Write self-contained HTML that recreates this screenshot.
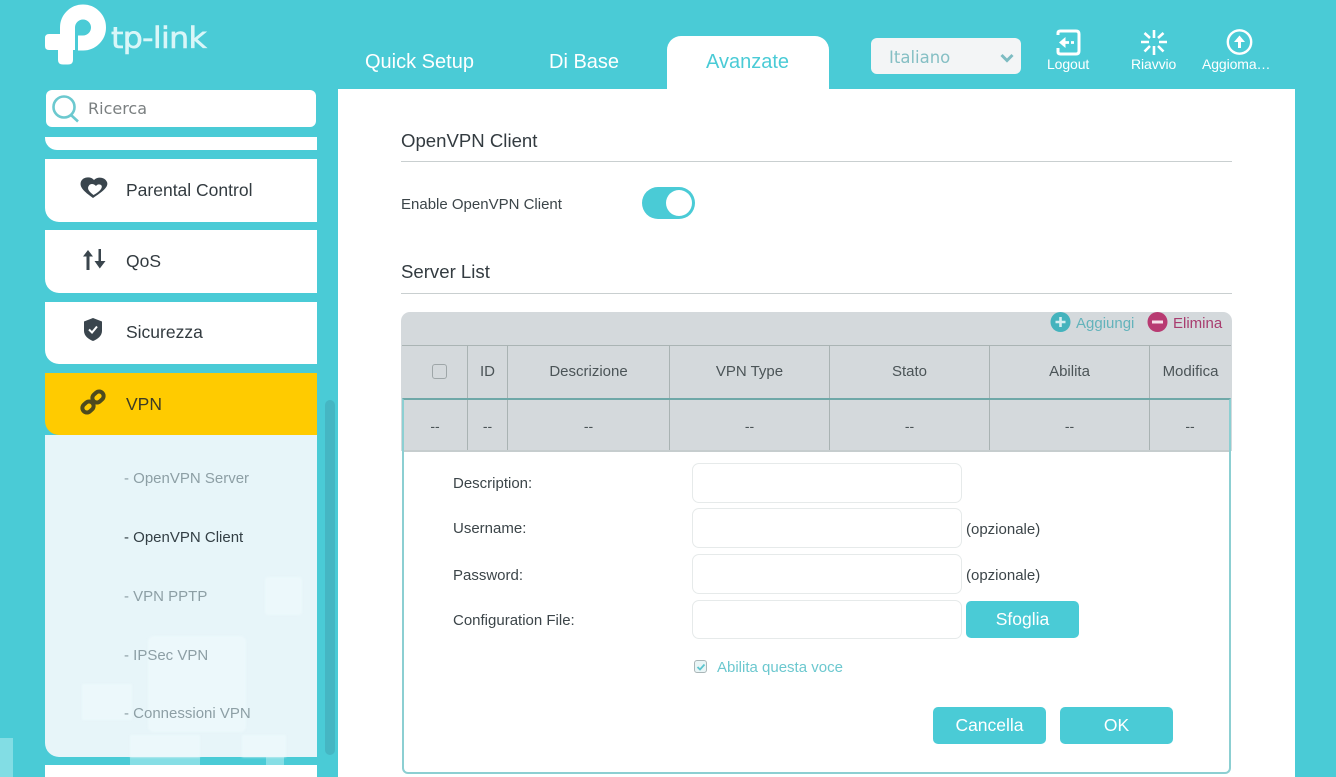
<!DOCTYPE html>
<html><head><meta charset="utf-8">
<style>
html{margin:0;padding:0;overflow:hidden;width:1336px;height:777px}
body{margin:0;padding:0;width:1336px;height:777px;overflow:hidden;position:relative;background:#4acbd6;font-family:"Liberation Sans",Arial,sans-serif;color:#333b40}
.a{position:absolute}
.t{position:absolute;white-space:nowrap;line-height:20px}
.card{position:absolute;left:45px;width:272px;background:#fff;border-radius:0 0 0 14px}
.sub{position:absolute;left:124px;font-size:15px;color:#8d9fa5;white-space:nowrap;line-height:20px}
.c{position:absolute;width:1px;background:#a9b3b3}
.cell{position:absolute;text-align:center;font-size:14px;line-height:20px;color:#4b5457}
.inp{position:absolute;left:692px;width:268px;background:#fff;border:1px solid #e6eaea;border-radius:7px}
.lab{position:absolute;left:453px;font-size:15px;color:#3c4549;line-height:20px;white-space:nowrap}
.btn{position:absolute;background:#4acbd6;color:#fff;border-radius:5px;text-align:center;font-size:17.5px;line-height:36px;height:37px}
.nav{position:absolute;color:#fff;font-size:20px;line-height:24px;white-space:nowrap;top:50px}
.ic{position:absolute;color:#fff;font-size:14px;line-height:16px;white-space:nowrap;top:56px;letter-spacing:-.1px;text-align:center}
</style></head><body>

<!-- logo -->
<svg class="a" style="left:40px;top:0" width="110" height="70" viewBox="40 0 110 70">
<path d="M67.500 36V27.500A15.500 15.500 0 1 1 83 43H78" fill="none" stroke="#fff" stroke-width="15"/>
<path d="M49 34H75V50H73V60Q73 64.500 68 64.500H63Q58 64.500 58 60V50H49Q45 50 45 46V38Q45 34 49 34Z" fill="#fff"/>
</svg>
<div class="t" style="left:111px;top:21px;line-height:34px;color:#d9f6f8;letter-spacing:-.6px;font-family:'DejaVu Sans','Liberation Sans',sans-serif;font-size:29px;-webkit-text-stroke:.6px #d9f6f8;transform:scaleX(1.09);transform-origin:left">tp-link</div>

<!-- nav -->
<div class="nav" style="left:365px">Quick Setup</div>
<div class="nav" style="left:549px">Di Base</div>
<div class="a" style="left:667px;top:36px;width:162px;height:54px;background:#fff;border-radius:14px 14px 0 0"></div>
<div class="nav" style="left:706px;color:#4acbd6;font-size:20px">Avanzate</div>

<!-- language -->
<div class="a" style="left:871px;top:38px;width:150px;height:36px;background:#f3f5f6;border-radius:6px"></div>
<div class="t" style="left:889px;top:48px;color:#85bfc4;font-family:'DejaVu Sans','Liberation Sans',sans-serif;font-size:16.500px">Italiano</div>
<svg class="a" style="left:998px;top:50px" width="20" height="16" viewBox="0 0 20 16"><path d="M3.500 5L9 10.500L14.500 5" fill="none" stroke="#7dbcc2" stroke-width="3"/></svg>

<!-- header icons -->
<svg class="a" style="left:1050px;top:26px" width="36" height="32" viewBox="0 0 36 32" fill="none" stroke="#fff">
<path d="M8 9V7Q8 5 10.500 5H26Q29 5 29 8V25Q29 28 26 28H10.500Q8 28 8 26V22" stroke-width="3"/>
<path d="M9 16.500L15.500 11V22Z" fill="#fff" stroke="none"/><path d="M15 16.500H19M21 16.500H24" stroke-width="2.800"/>
</svg>
<div class="ic" style="left:1047px">Logout</div>
<svg class="a" style="left:1138px;top:27px" width="32" height="30" viewBox="0 0 32 30" stroke="#fff" stroke-width="2.600">
<path d="M16 3V11M16 19V28M3 15H11M21 15H29M6.500 6L12 11M20 19L25.500 24.500M25.500 6L20 11M12 19L6.500 24.500"/></svg>
<div class="ic" style="left:1131px">Riavvio</div>
<svg class="a" style="left:1225px;top:28px" width="30" height="28" viewBox="0 0 30 28" fill="none" stroke="#fff">
<circle cx="14.500" cy="14" r="11.700" stroke-width="2.400"/><path d="M14.500 7.500L20 14H9Z" fill="#fff" stroke="none"/><path d="M14.500 13V20" stroke-width="3"/></svg>
<div class="ic" style="left:1202px">Aggioma…</div>

<!-- search -->
<div class="a" style="left:46px;top:90px;width:270px;height:37px;background:#fff;border-radius:6px"></div>
<svg class="a" style="left:50px;top:94px" width="32" height="32" viewBox="0 0 32 32" fill="none" stroke="#6cc9cf" stroke-width="2.600"><circle cx="14" cy="13" r="10.500"/><path d="M21 21L28 27.500"/></svg>
<div class="t" style="left:88px;top:99px;color:#7a7f80;font-family:'DejaVu Sans','Liberation Sans',sans-serif;font-size:16px">Ricerca</div>

<!-- sidebar -->
<div class="card" style="top:137px;height:13px;border-radius:0 0 0 12px"></div>
<div class="a" style="left:0;top:738px;width:13px;height:39px;background:#82dde4"></div>
<div class="a" style="left:130px;top:757px;width:70px;height:8px;background:#86dee5"></div>
<div class="a" style="left:266px;top:757px;width:18px;height:8px;background:#86dee5"></div>
<div class="card" style="top:159px;height:63px"></div>
<div class="card" style="top:230px;height:63px"></div>
<div class="card" style="top:302px;height:62px"></div>
<div class="card" style="top:373px;height:62px;background:#ffcb00"></div>
<div class="card" style="top:435px;height:322px;background:#e7f5f9"></div>
<div class="card" style="top:765px;height:12px;border-radius:0"></div>
<!-- faint watermark -->
<div class="a" style="left:265px;top:577px;width:37px;height:38px;background:#ecf8fb;border-radius:3px;filter:blur(1px)"></div>
<div class="a" style="left:148px;top:636px;width:98px;height:96px;background:#ecf8fb;border-radius:6px;filter:blur(1px)"></div>
<div class="a" style="left:82px;top:684px;width:50px;height:36px;background:#ecf8fb;filter:blur(1px)"></div>
<div class="a" style="left:130px;top:735px;width:70px;height:22px;background:#ecf8fb;filter:blur(1px)"></div>
<div class="a" style="left:242px;top:735px;width:44px;height:22px;background:#ecf8fb;filter:blur(1px)"></div>
<div class="a" style="left:325px;top:400px;width:10px;height:355px;background:#45b6c3;border-radius:5px"></div>

<svg class="a" style="left:78px;top:176px" width="32" height="24" viewBox="0 0 32 24">
<path d="M16 4C13 0 5 .5 3 5.500C1 11 6 15.500 15 22C24 16 31 11 29 6C26.500 .5 19 .5 16 4Z" fill="#3a454d"/>
<path d="M15.500 19C10 15 9 12 11 9.500C13 7 16 8 18 10C19.500 8 22 8 23.500 9.500C25 12 21 16 15.500 19Z" fill="#fff"/></svg>
<div class="t" style="left:126px;top:180px;font-size:17.500px">Parental Control</div>
<svg class="a" style="left:80px;top:247px" width="28" height="26" viewBox="0 0 28 26" fill="#3a454d" stroke="none">
<path d="M8 3L13 9.500H9.500V23H6.500V9.500H3Z"/><path d="M18.500 2H21V14H25.500L19.800 21.500L14.500 14H18.500Z"/></svg>
<div class="t" style="left:126px;top:251px;font-size:17.500px">QoS</div>
<svg class="a" style="left:82px;top:317px" width="22" height="26" viewBox="0 0 22 26">
<path d="M11 1L20 4.500V14C20 19 15 22.500 11 24C7 22.500 2 19 2 14V4.500Z" fill="#3a454d"/><path d="M7 12.500L10 15.500L15 9.500" fill="none" stroke="#fff" stroke-width="2"/></svg>
<div class="t" style="left:126px;top:322px;font-size:17.500px">Sicurezza</div>
<svg class="a" style="left:79px;top:388px" width="28" height="28" viewBox="0 0 28 28" fill="none" stroke="#4d4a1e" stroke-width="4">
<rect x="3" y="14.500" width="12" height="9" rx="4.500" transform="rotate(-42 9 19)"/><rect x="13" y="4.500" width="12" height="9" rx="4.500" transform="rotate(-42 19 9)"/></svg>
<div class="t" style="left:126px;top:394px;font-size:17.500px;color:#3d3c25">VPN</div>

<div class="sub" style="top:469px">- OpenVPN Server</div>
<div class="sub" style="top:528px;color:#333f45">- OpenVPN Client</div>
<div class="sub" style="top:587px">- VPN PPTP</div>
<div class="sub" style="top:646px">- IPSec VPN</div>
<div class="sub" style="top:704px">- Connessioni VPN</div>

<!-- main -->
<div class="a" style="left:338px;top:89px;width:957px;height:688px;background:#fff"></div>
<div class="a" style="left:667px;top:86px;width:162px;height:6px;background:#fff"></div>

<div class="t" style="left:401px;top:131px;font-size:18.600px">OpenVPN Client</div>
<div class="a" style="left:401px;top:161px;width:831px;height:1px;background:#c9cfd0"></div>
<div class="t" style="left:401px;top:195px;font-size:15px;color:#3c4549">Enable OpenVPN Client</div>
<div class="a" style="left:642px;top:187px;width:53px;height:32px;background:#4acbd6;border-radius:16px"></div>
<div class="a" style="left:666px;top:190px;width:26px;height:26px;background:#fff;border-radius:50%"></div>

<div class="t" style="left:401px;top:262px;font-size:18.600px">Server List</div>
<div class="a" style="left:401px;top:293px;width:831px;height:1px;background:#c9cfd0"></div>

<!-- table -->
<div class="a" style="left:401px;top:312px;width:831px;height:139px;background:#d4d9dc;border-radius:9px 9px 0 0"></div>
<div class="a" style="left:402px;top:345px;width:829px;height:1px;background:#aab4b4"></div>
<svg class="a" style="left:1050px;top:312px" width="21" height="21" viewBox="0 0 21 21"><circle cx="10.500" cy="10" r="10" fill="#44b3bd"/><path d="M10.500 5V15M5.500 10H15.500" stroke="#d4eef1" stroke-width="2.600"/></svg>
<div class="t" style="left:1076px;top:314px;font-size:15px;color:#63b3bb">Aggiungi</div>
<svg class="a" style="left:1147px;top:312px" width="21" height="21" viewBox="0 0 21 21"><circle cx="10.500" cy="10" r="10" fill="#b83b72"/><path d="M5 10H16" stroke="#f6e1ea" stroke-width="3"/></svg>
<div class="t" style="left:1173px;top:314px;font-size:15px;color:#a83d6f">Elimina</div>

<div class="c" style="left:467px;top:345px;height:105px"></div>
<div class="c" style="left:507px;top:345px;height:105px"></div>
<div class="c" style="left:669px;top:345px;height:105px"></div>
<div class="c" style="left:829px;top:345px;height:105px"></div>
<div class="c" style="left:989px;top:345px;height:105px"></div>
<div class="c" style="left:1149px;top:345px;height:105px"></div>
<div class="a" style="left:432px;top:364px;width:13px;height:13px;border:1.500px solid #9ea6a8;border-radius:3px"></div>
<div class="cell" style="left:468px;top:362px;width:39px;font-size:15px">ID</div>
<div class="cell" style="left:508px;top:362px;width:161px;font-size:15px">Descrizione</div>
<div class="cell" style="left:670px;top:362px;width:159px;font-size:15px">VPN Type</div>
<div class="cell" style="left:830px;top:362px;width:159px;font-size:15px">Stato</div>
<div class="cell" style="left:990px;top:362px;width:159px;font-size:15px">Abilita</div>
<div class="cell" style="left:1150px;top:362px;width:81px;font-size:15px">Modifica</div>

<!-- selected row frame -->
<div class="a" style="left:402px;top:398px;width:825px;height:372px;border:2px solid #8ccfd2;border-radius:0 0 6px 6px;border-top:2px solid #6fa8a8"></div>
<div class="a" style="left:404px;top:450px;width:825px;height:1.500px;background:#c6cdce"></div>
<div class="cell" style="left:403px;top:416px;width:64px">--</div>
<div class="cell" style="left:468px;top:416px;width:39px">--</div>
<div class="cell" style="left:508px;top:416px;width:161px">--</div>
<div class="cell" style="left:670px;top:416px;width:159px">--</div>
<div class="cell" style="left:830px;top:416px;width:159px">--</div>
<div class="cell" style="left:990px;top:416px;width:159px">--</div>
<div class="cell" style="left:1150px;top:416px;width:80px">--</div>

<!-- form -->
<div class="lab" style="top:474px">Description:</div>
<div class="inp" style="top:463px;height:38px"></div>
<div class="lab" style="top:519px">Username:</div>
<div class="inp" style="top:508px;height:38px"></div>
<div class="t" style="left:966px;top:520px;font-size:15px;color:#3c4549">(opzionale)</div>
<div class="lab" style="top:566px">Password:</div>
<div class="inp" style="top:554px;height:38px"></div>
<div class="t" style="left:966px;top:566px;font-size:15px;color:#3c4549">(opzionale)</div>
<div class="lab" style="top:611px">Configuration File:</div>
<div class="inp" style="top:600px;height:37px"></div>
<div class="btn" style="left:966px;top:601px;width:113px">Sfoglia</div>
<div class="a" style="left:694px;top:660px;width:11px;height:11px;border:1.500px solid #aab6b8;border-radius:3px;background:#e9f5f6"></div>
<svg class="a" style="left:695px;top:661px" width="12" height="12" viewBox="0 0 12 12"><path d="M2.500 6L5 8.500L9.500 3.500" fill="none" stroke="#5cc5ce" stroke-width="1.800"/></svg>
<div class="t" style="left:717px;top:658px;font-size:15px;color:#6cc8cf">Abilita questa voce</div>
<div class="btn" style="left:933px;top:707px;width:113px">Cancella</div>
<div class="btn" style="left:1060px;top:707px;width:113px">OK</div>

</body></html>
